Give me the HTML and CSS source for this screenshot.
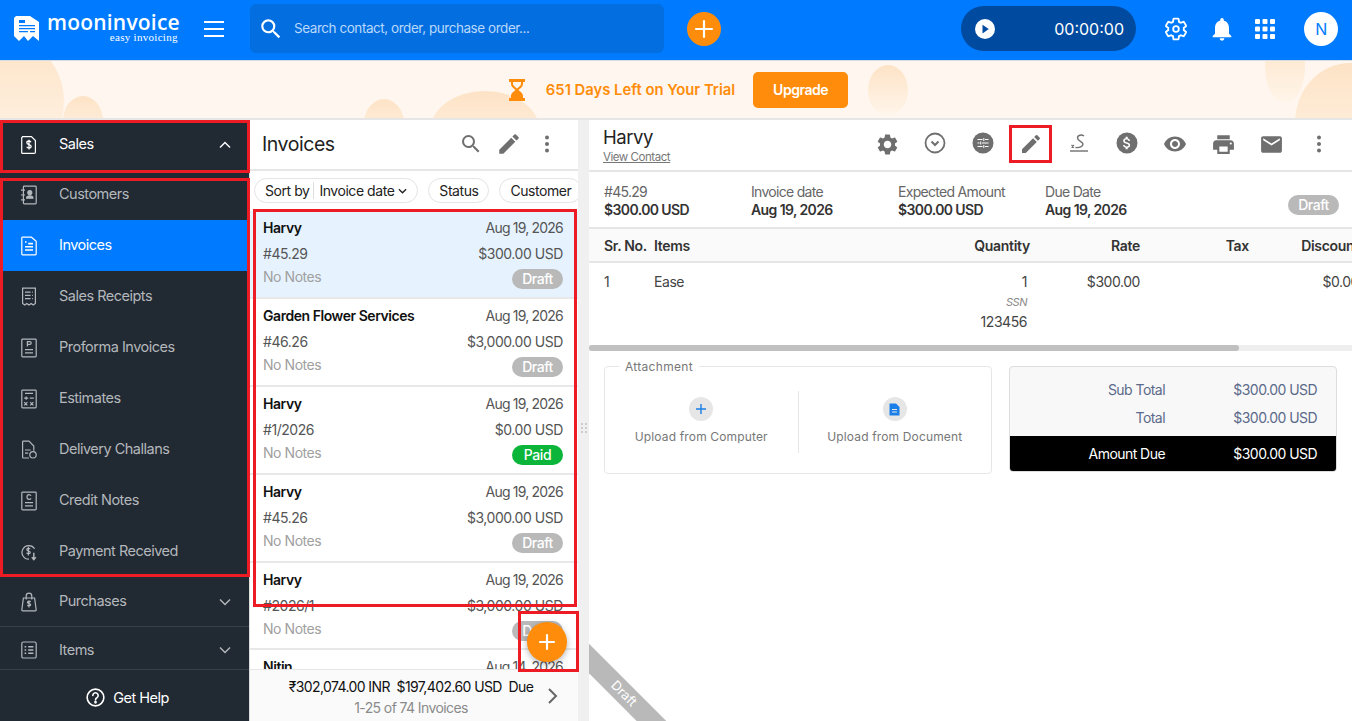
FILE: index.html
```html
<!DOCTYPE html>
<html lang="en">
<head>
    <meta charset="UTF-8">
    <meta name="viewport" content="width=device-width, initial-scale=1.0">
    <title>Invoices</title>
    <link rel="stylesheet" href="styles.css">
</head>
<body>
<div class="app">
    <header class="topbar">
        <div class="logo">
            <svg class="logo-mark" width="26" height="25" viewBox="0 0 26 25"><path fill="#fff" d="M2 0h14l9 6v19l-6-5-5 5-4-5-5 5-5-5V2z"/><path fill="#007bff" d="M5 4h6v3H5zM5 9h16v1.300H5zM5 12h16v1.300H5zM5 15h9v1.300H5zM16 15h5v1.300h-5z"/></svg>
            <div class="logo-text">
                <div class="logo-name">mooninvoice</div>
                <div class="logo-tag">easy invoicing</div>
            </div>
        </div>
        <div class="hamburger"><span></span><span></span><span></span></div>
        <div class="search">
            <svg width="26" height="26" viewBox="0 0 24 24" fill="#fff"><path d="M15.500 14h-.79l-.28-.27A6.471 6.471 0 0 0 16 9.500 6.500 6.500 0 1 0 9.500 16c1.610 0 3.090-.59 4.230-1.570l.27.28v.79l5 4.990L20.490 19l-4.990-5zm-6 0C7.010 14 5 11.990 5 9.500S7.010 5 9.500 5 14 7.010 14 9.500 11.990 14 9.500 14z"/></svg>
            <span>Search contact, order, purchase order...</span>
        </div>
        <div class="add-btn">
            <svg width="22" height="22" viewBox="0 0 22 22" stroke="#fff" stroke-width="2.200" stroke-linecap="round"><path d="M11 3v16M3 11h16"/></svg>
        </div>
        <div class="timer">
            <span class="play"><svg width="20" height="20" viewBox="0 0 16 16"><circle cx="8" cy="8" r="8" fill="#fff"/><path d="M6 4.500l5 3.500-5 3.500z" fill="#004a9f"/></svg></span>
            <span class="time">00:00:00</span>
        </div>
        <div class="top-icons">
            <svg width="26" height="26" viewBox="0 0 24 24" fill="none" stroke="#fff" stroke-width="1.700"><path d="M19.140 12.940c.04-.3.06-.61.06-.94 0-.32-.02-.64-.07-.94l2.030-1.580a.49.49 0 0 0 .12-.61l-1.920-3.320a.488.488 0 0 0-.59-.22l-2.390.96c-.5-.38-1.030-.7-1.620-.94l-.36-2.540a.484.484 0 0 0-.48-.41h-3.840c-.24 0-.43.17-.47.41l-.36 2.540c-.59.24-1.130.57-1.620.94l-2.390-.96c-.22-.08-.47 0-.59.22L2.740 8.870c-.12.21-.08.47.12.61l2.030 1.580c-.05.3-.09.63-.09.94s.02.64.07.94l-2.030 1.580a.49.49 0 0 0-.12.61l1.920 3.320c.12.22.37.29.59.22l2.390-.96c.5.38 1.030.7 1.620.94l.36 2.540c.05.24.24.41.48.41h3.840c.24 0 .44-.17.47-.41l.36-2.540c.59-.24 1.130-.56 1.620-.94l2.390.96c.22.08.47 0 .59-.22l1.920-3.320c.12-.22.07-.47-.12-.61l-2.010-1.580z"/><circle cx="12" cy="12" r="2.600"/></svg>
            <svg width="28" height="28" viewBox="0 0 24 24" fill="#fff"><path d="M12 22c1.100 0 2-.9 2-2h-4a2 2 0 0 0 2 2zm6-6v-5c0-3.070-1.630-5.640-4.500-6.320V4a1.500 1.500 0 0 0-3 0v.68C7.640 5.360 6 7.920 6 11v5l-2 2v1h16v-1l-2-2z"/></svg>
            <svg width="20" height="20" viewBox="0 0 20 20" fill="#fff"><rect x="0" y="0" width="5" height="5" rx="1"/><rect x="7.500" y="0" width="5" height="5" rx="1"/><rect x="15" y="0" width="5" height="5" rx="1"/><rect x="0" y="7.500" width="5" height="5" rx="1"/><rect x="7.500" y="7.500" width="5" height="5" rx="1"/><rect x="15" y="7.500" width="5" height="5" rx="1"/><rect x="0" y="15" width="5" height="5" rx="1"/><rect x="7.500" y="15" width="5" height="5" rx="1"/><rect x="15" y="15" width="5" height="5" rx="1"/></svg>
        </div>
        <div class="avatar">N</div>
    </header>

    <section class="trial">
        <i class="blob b1"></i><i class="blob b2"></i><i class="blob b3"></i><i class="blob b4"></i><i class="blob b5"></i><i class="blob b6"></i><i class="blob b7"></i>
        <svg width="18" height="22" viewBox="0 0 18 22" fill="#ff8c0a"><path d="M1 0h16v3h-2v2c0 3-3 4.500-4.500 6C12 12.500 15 14 15 17v2h2v3H1v-3h2v-2c0-3 3-4.500 4.500-6C6 9.500 3 8 3 5V3H1zM5 3v2c0 1.500 2.500 3 4 4.500C10.500 8 13 6.500 13 5V3z"/></svg>
        <span class="trial-text">651 Days Left on Your Trial</span>
        <span class="upgrade">Upgrade</span>
    </section>

    <div class="main">
        <aside class="sidebar">
            <div class="side-group active-group">
                <svg class="side-icon" viewBox="0 0 20 24"><path d="M2 1.500h11l5 5V21a1.500 1.500 0 0 1-1.500 1.500h-15A1.500 1.500 0 0 1 .9 21V3z"/><path d="M12.500 8.500C12 7.500 11 7 10 7c-1.500 0-2.700.8-2.700 2.200 0 3 5.400 1.600 5.400 4.500 0 1.400-1.200 2.300-2.700 2.300-1.200 0-2.300-.6-2.800-1.700M10 5.500v12" stroke-width="1.600"/></svg>
                <span>Sales</span>
                <svg class="chev" viewBox="0 0 12 8"><path d="M1 6.500l5-5 5 5"/></svg>
            </div>
            <nav class="side-nav">
                <a class="side-link">
                    <svg class="side-icon" viewBox="0 0 20 24"><rect x="3" y="1" width="16" height="22" rx="1"/><path d="M0 6h5M0 12h5M0 18h5"/><circle cx="11" cy="9" r="2.500" fill="currentColor"/><path d="M7 16c0-4 8-4 8 0z" fill="currentColor"/></svg>
                    <span>Customers</span>
                </a>
                <a class="side-link current">
                    <svg class="side-icon" viewBox="0 0 20 24"><path d="M2 1h11l6 5v16a1 1 0 0 1-1 1H2a1 1 0 0 1-1-1V2a1 1 0 0 1 1-1z"/><path d="M5 7h2M9 9h6M5 13h10M5 17h10" stroke-width="2"/></svg>
                    <span>Invoices</span>
                </a>
                <a class="side-link">
                    <svg class="side-icon" viewBox="0 0 20 24"><path d="M2 1h16v19l-2.700 2-2.600-2-2.700 2-2.700-2-2.600 2L2 20z"/><path d="M5 6h7M14 6h1M5 10h7M14 10h1M5 14h7M14 14h1"/></svg>
                    <span>Sales Receipts</span>
                </a>
                <a class="side-link">
                    <svg class="side-icon" viewBox="0 0 20 24"><rect x="1" y="1" width="18" height="22" rx="1"/><path d="M5 14h10M5 18h10M8 10V4h3a1.500 1.500 0 0 1 0 3.500H8"/></svg>
                    <span>Proforma Invoices</span>
                </a>
                <a class="side-link">
                    <svg class="side-icon" viewBox="0 0 20 24"><rect x="1" y="1" width="18" height="22" rx="1"/><path d="M5 5h10M4 11h5M6.500 9v4M11 11h5M4 16l4 4M8 16l-4 4M11.500 16l4 4M15.500 16l-4 4"/></svg>
                    <span>Estimates</span>
                </a>
                <a class="side-link">
                    <svg class="side-icon" viewBox="0 0 20 24"><path d="M10 22H3a1 1 0 0 1-1-1V2a1 1 0 0 1 1-1h7l6 6v6"/><path d="M5 12h7M5 16h4"/><circle cx="15" cy="18" r="4"/></svg>
                    <span>Delivery Challans</span>
                </a>
                <a class="side-link">
                    <svg class="side-icon" viewBox="0 0 20 24"><rect x="1" y="1" width="18" height="22" rx="1"/><path d="M5 14h10M5 18h10M12.500 5.500C12 4.500 11 4 10 4 8.500 4 7.500 5 7.500 7S8.500 10 10 10c1 0 2-.5 2.500-1.500"/></svg>
                    <span>Credit Notes</span>
                </a>
                <a class="side-link">
                    <svg class="side-icon" viewBox="0 0 20 24"><path d="M17 8a8.500 8.500 0 1 0-7 13"/><path d="M11.500 8.500C11 7.700 10.200 7.300 9.200 7.300c-1.200 0-2 .7-2 1.700 0 2.300 4.300 1.200 4.300 3.500 0 1-.9 1.700-2.200 1.700-1 0-1.900-.5-2.300-1.300M9.200 5.500v11"/><path d="M16 13v8M13.500 18.500l2.500 3 2.500-3" stroke-width="1.800"/></svg>
                    <span>Payment Received</span>
                </a>
            </nav>
            <div class="side-group">
                <svg class="side-icon" viewBox="0 0 20 24"><path d="M3 7h14l2 15a1 1 0 0 1-1 1H2a1 1 0 0 1-1-1z"/><path d="M6.500 9V4.500a3.500 3.500 0 0 1 7 0V9"/><path d="M12 12c-.4-.7-1.100-1-2-1-1.100 0-1.900.6-1.900 1.500 0 2 4 1 4 3 0 .9-.9 1.500-2 1.500-.9 0-1.700-.4-2.100-1.200M10 10v9"/></svg>
                <span>Purchases</span>
                <svg class="chev" viewBox="0 0 12 8"><path d="M1 1.500l5 5 5-5"/></svg>
            </div>
            <div class="side-group short">
                <svg class="side-icon" viewBox="0 0 20 24"><rect x="1" y="2" width="18" height="20" rx="2"/><path d="M4.500 8h2M9 8h6.500M4.500 12h2M9 12h6.500M4.500 16h2M9 16h6.500" stroke-width="2"/></svg>
                <span>Items</span>
                <svg class="chev" viewBox="0 0 12 8"><path d="M1 1.500l5 5 5-5"/></svg>
            </div>
            <div class="get-help">
                <svg width="19" height="19" viewBox="0 0 20 20" fill="none" stroke="#fff" stroke-width="1.700"><circle cx="10" cy="10" r="8.800"/><path d="M7.200 7.800A2.800 2.800 0 1 1 11.500 10.200c-1 .6-1.500 1.100-1.500 2.300" stroke-linecap="round"/><circle cx="10" cy="15" r=".6" fill="#fff"/></svg>
                <span>Get Help</span>
            </div>
        </aside>

        <section class="list-pane">
            <div class="list-head">
                <h2>Invoices</h2>
                <svg width="24" height="24" viewBox="0 0 24 24" fill="#6f6f6f"><path d="M15.500 14h-.79l-.28-.27A6.471 6.471 0 0 0 16 9.500 6.500 6.500 0 1 0 9.500 16c1.610 0 3.090-.59 4.230-1.570l.27.28v.79l5 4.990L20.490 19l-4.990-5zm-6 0C7.010 14 5 11.990 5 9.500S7.010 5 9.500 5 14 7.010 14 9.500 11.990 14 9.500 14z"/></svg>
                <svg width="26" height="26" viewBox="0 0 24 24" fill="#6f6f6f"><path d="M3 17.250V21h3.750L17.810 9.940l-3.750-3.750L3 17.250zM20.710 7.040a1 1 0 0 0 0-1.410l-2.340-2.340a1 1 0 0 0-1.410 0l-1.830 1.830 3.750 3.750 1.830-1.830z"/></svg>
                <svg width="24" height="24" viewBox="0 0 24 24" fill="#6f6f6f"><circle cx="12" cy="5.500" r="2"/><circle cx="12" cy="12" r="2"/><circle cx="12" cy="18.500" r="2"/></svg>
            </div>
            <div class="filters">
                <div class="chip sort"><span class="sort-by">Sort by</span><span>Invoice date</span><svg width="9" height="6" viewBox="0 0 10 6" fill="none" stroke="#222" stroke-width="1.500"><path d="M1 1l4 4 4-4"/></svg></div>
                <div class="chip">Status</div>
                <div class="chip">Customer</div>
            </div>
            <div class="cards">
                <div class="card selected">
                    <div class="card-row"><b>Harvy</b><span class="date">Aug 19, 2026</span></div>
                    <div class="card-row"><span>#45.29</span><span>$300.00 USD</span></div>
                    <div class="card-row last"><span class="notes">No Notes</span><span class="badge">Draft</span></div>
                </div>
                <div class="card">
                    <div class="card-row"><b>Garden Flower Services</b><span class="date">Aug 19, 2026</span></div>
                    <div class="card-row"><span>#46.26</span><span>$3,000.00 USD</span></div>
                    <div class="card-row last"><span class="notes">No Notes</span><span class="badge">Draft</span></div>
                </div>
                <div class="card">
                    <div class="card-row"><b>Harvy</b><span class="date">Aug 19, 2026</span></div>
                    <div class="card-row"><span>#1/2026</span><span>$0.00 USD</span></div>
                    <div class="card-row last"><span class="notes">No Notes</span><span class="badge paid">Paid</span></div>
                </div>
                <div class="card">
                    <div class="card-row"><b>Harvy</b><span class="date">Aug 19, 2026</span></div>
                    <div class="card-row"><span>#45.26</span><span>$3,000.00 USD</span></div>
                    <div class="card-row last"><span class="notes">No Notes</span><span class="badge">Draft</span></div>
                </div>
                <div class="card">
                    <div class="card-row"><b>Harvy</b><span class="date">Aug 19, 2026</span></div>
                    <div class="card-row"><span>#2026/1</span><span>$3,000.00 USD</span></div>
                    <div class="card-row last"><span class="notes">No Notes</span><span class="badge">Draft</span></div>
                </div>
                <div class="card">
                    <div class="card-row"><b>Nitin</b><span class="date">Aug 14, 2026</span></div>
                </div>
            </div>
            <div class="list-foot">
                <div class="foot-text">
                    <div class="foot-sum">₹302,074.00 INR&nbsp; $197,402.60 USD&nbsp; Due</div>
                    <div class="foot-count">1-25 of 74 Invoices</div>
                </div>
                <svg width="12" height="18" viewBox="0 0 12 18" fill="none" stroke="#666" stroke-width="2"><path d="M2 2l7 7-7 7"/></svg>
            </div>
            <div class="fab"><svg width="18" height="18" viewBox="0 0 18 18" stroke="#fff" stroke-width="2.200" stroke-linecap="round"><path d="M9 2v14M2 9h14"/></svg></div>
        </section>

        <div class="gutter"><i></i><i></i><i></i><i></i><i></i><i></i></div>

        <section class="detail">
            <div class="detail-head">
                <div class="contact">
                    <div class="contact-name">Harvy</div>
                    <a class="contact-link">View Contact</a>
                </div>
                <div class="tools">
                    <span class="tool"><svg width="25" height="25" viewBox="0 0 24 24" fill="#6f6f6f"><path fill-rule="evenodd" d="M19.140 12.940c.04-.3.06-.61.06-.94 0-.32-.02-.64-.07-.94l2.030-1.580a.49.49 0 0 0 .12-.61l-1.920-3.320a.488.488 0 0 0-.59-.22l-2.390.96c-.5-.38-1.030-.7-1.620-.94l-.36-2.540a.484.484 0 0 0-.48-.41h-3.840c-.24 0-.43.17-.47.41l-.36 2.540c-.59.24-1.130.57-1.620.94l-2.390-.96c-.22-.08-.47 0-.59.22L2.740 8.870c-.12.21-.08.47.12.61l2.030 1.580c-.05.3-.09.63-.09.94s.02.64.07.94l-2.030 1.580a.49.49 0 0 0-.12.61l1.920 3.320c.12.22.37.29.59.22l2.390-.96c.5.38 1.030.7 1.620.94l.36 2.540c.05.24.24.41.48.41h3.840c.24 0 .44-.17.47-.41l.36-2.540c.59-.24 1.130-.56 1.620-.94l2.390.96c.22.08.47 0 .59-.22l1.920-3.320c.12-.22.07-.47-.12-.61l-2.010-1.580zM12 15.600c-1.980 0-3.600-1.620-3.600-3.600s1.620-3.600 3.600-3.600 3.600 1.620 3.600 3.600-1.620 3.600-3.600 3.600z"/></svg></span>
                    <span class="tool"><svg width="22" height="22" viewBox="0 0 22 22" fill="none" stroke="#6f6f6f" stroke-width="1.800"><circle cx="11" cy="11" r="9.500"/><path d="M7.500 9.500L11 13l3.500-3.500" stroke-width="2"/></svg></span>
                    <span class="tool"><svg width="22" height="22" viewBox="0 0 22 22"><circle cx="11" cy="11" r="10.500" fill="#6f6f6f"/><path d="M5.500 7.500h5M13 7.500h3.500M5.500 11h2M10 11h6.500M5.500 14.500h5M13 14.500h3.500M11.800 6v3M8.700 9.500v3M11.800 13v3" stroke="#fff" stroke-width="1" fill="none"/></svg></span>
                    <span class="tool"><svg width="24" height="24" viewBox="0 0 24 24" fill="#6f6f6f"><path d="M3 17.250V21h3.750L17.810 9.940l-3.750-3.750L3 17.250zM20.710 7.040a1 1 0 0 0 0-1.410l-2.340-2.340a1 1 0 0 0-1.410 0l-1.830 1.830 3.750 3.750 1.830-1.830z"/></svg></span>
                    <span class="tool"><svg width="22" height="22" viewBox="0 0 22 22" fill="none" stroke="#6f6f6f" stroke-width="1.400"><path d="M16 4C13.500 2.300 9.500 3 9.500 6S15 9.500 15 12 11.500 16 7.500 15.500"/><path d="M3.500 13l2.500 2.500M6 13l-2.500 2.500" stroke-width="1.100"/><path d="M2 19h18" stroke-width="1.400"/></svg></span>
                    <span class="tool"><svg width="22" height="22" viewBox="0 0 22 22"><circle cx="11" cy="11" r="10.500" fill="#6f6f6f"/><g transform="translate(2.600 2.600) scale(.7)"><path fill="#fff" d="M11.800 10.900c-2.270-.59-3-1.200-3-2.150 0-1.090 1.010-1.850 2.700-1.850 1.780 0 2.440.85 2.500 2.100h2.210c-.07-1.720-1.120-3.300-3.210-3.810V3h-3v2.160c-1.940.42-3.500 1.680-3.500 3.610 0 2.310 1.910 3.460 4.700 4.130 2.500.6 3 1.480 3 2.410 0 .69-.49 1.790-2.700 1.790-2.060 0-2.870-.92-2.980-2.100h-2.200c.12 2.190 1.760 3.420 3.680 3.830V21h3v-2.150c1.950-.37 3.500-1.500 3.500-3.550 0-2.840-2.430-3.810-4.700-4.400z"/></g></svg></span>
                    <span class="tool"><svg width="24" height="24" viewBox="0 0 24 24" fill="#6f6f6f"><path d="M12 4.500C7 4.500 2.730 7.610 1 12c1.730 4.390 6 7.500 11 7.500s9.270-3.110 11-7.500c-1.730-4.390-6-7.500-11-7.500zM12 17c-2.760 0-5-2.240-5-5s2.240-5 5-5 5 2.240 5 5-2.240 5-5 5zm0-8c-1.660 0-3 1.340-3 3s1.340 3 3 3 3-1.340 3-3-1.340-3-3-3z"/></svg></span>
                    <span class="tool"><svg width="25" height="25" viewBox="0 0 24 24" fill="#6f6f6f"><path d="M19 8H5c-1.660 0-3 1.340-3 3v6h4v4h12v-4h4v-6c0-1.660-1.340-3-3-3zm-3 11H8v-5h8v5zm3-7c-.55 0-1-.45-1-1s.45-1 1-1 1 .45 1 1-.45 1-1 1zm-1-9H6v4h12V3z"/></svg></span>
                    <span class="tool"><svg width="25" height="25" viewBox="0 0 24 24" fill="#6f6f6f"><path d="M20 4H4c-1.100 0-1.990.9-1.990 2L2 18c0 1.100.9 2 2 2h16c1.100 0 2-.9 2-2V6c0-1.100-.9-2-2-2zm0 4l-8 5-8-5V6l8 5 8-5v2z"/></svg></span>
                    <span class="tool"><svg width="24" height="24" viewBox="0 0 24 24" fill="#6f6f6f"><circle cx="12" cy="5.500" r="2"/><circle cx="12" cy="12" r="2"/><circle cx="12" cy="18.500" r="2"/></svg></span>
                </div>
            </div>

            <div class="summary">
                <div class="sum-col"><span>#45.29</span><b>$300.00 USD</b></div>
                <div class="sum-col"><span>Invoice date</span><b>Aug 19, 2026</b></div>
                <div class="sum-col"><span>Expected Amount</span><b>$300.00 USD</b></div>
                <div class="sum-col"><span>Due Date</span><b>Aug 19, 2026</b></div>
                <span class="badge sum-badge">Draft</span>
            </div>

            <div class="table-wrap">
                <div class="t-grid t-head">
                    <span>Sr. No.</span><span>Items</span><span class="r">Quantity</span><span class="r">Rate</span><span class="r">Tax</span><span class="r">Discount</span>
                </div>
                <div class="t-grid t-row">
                    <span>1</span><span>Ease</span>
                    <span class="r qty">1<em>SSN</em><span>123456</span></span>
                    <span class="r">$300.00</span><span></span><span class="r">$0.00</span>
                </div>
                <div class="h-scroll"><div class="h-thumb"></div></div>
            </div>

            <div class="bottom">
                <fieldset class="attach">
                    <legend>Attachment</legend>
                    <div class="upload">
                        <span class="up-icon"><svg width="10" height="10" viewBox="0 0 10 10" stroke="#1a7fe8" stroke-width="1.400"><path d="M5 0v10M0 5h10"/></svg></span>
                        <span>Upload from Computer</span>
                    </div>
                    <div class="upload divided">
                        <span class="up-icon"><svg width="11" height="13" viewBox="0 0 11 13"><path d="M1 .5h6l3.500 3.500v8a.5.5 0 0 1-.5.5H1a.5.5 0 0 1-.5-.5V1A.5.5 0 0 1 1 .5z" fill="#1a7fe8"/><path d="M3 6.500h5M3 9h5" stroke="#e6e6e6"/></svg></span>
                        <span>Upload from Document</span>
                    </div>
                </fieldset>
                <div class="totals">
                    <div class="tot-row"><span>Sub Total</span><span>$300.00 USD</span></div>
                    <div class="tot-row"><span>Total</span><span>$300.00 USD</span></div>
                    <div class="tot-row due"><span>Amount Due</span><span>$300.00 USD</span></div>
                </div>
            </div>

            <div class="ribbon-wrap"><div class="ribbon">Draft</div></div>
        </section>
    </div>

    <!-- red review marks that sit on top of the page -->
    <div class="mark m-sales"></div>
    <div class="mark m-nav"></div>
    <div class="mark m-cards"></div>
    <div class="mark m-fab"></div>
    <div class="mark m-edit"></div>
</div>
</body>
</html>
```

FILE: styles.css
```css
* {
    box-sizing: border-box;
}
body {
    margin: 0;
    font-family: Inter, "Open Sans", sans-serif;
    font-size: 14px;
    letter-spacing: -0.45px;
    color: #222;
    background-color: #fff;
}
.app {
    position: relative;
    width: 1352px;
    height: 721px;
    overflow: hidden;
    display: flex;
    flex-direction: column;
}

/* top bar */
.topbar {
    height: 60px;
    flex: none;
    display: flex;
    align-items: center;
    background-color: #007bff;
    color: #fff;
    padding-bottom: 3px;
}
.logo {
    width: 204px;
    padding-left: 14px;
    display: flex;
    gap: 7px;
    align-items: center;
}
.logo-text {
    padding-bottom: 2px;
}
.logo-name {
    font-family: "Open Sans", sans-serif;
    font-size: 21px;
    font-weight: 600;
    line-height: 21px;
    letter-spacing: 0.2px;
}
.logo-tag {
    margin-top: -2px;
    font-family: "Liberation Serif", serif;
    font-size: 11px;
    line-height: 12px;
    text-align: right;
    letter-spacing: 0.3px;
    padding-right: 2px;
}
.hamburger {
    width: 20px;
    display: flex;
    flex-direction: column;
    gap: 5px;
}
.hamburger span {
    height: 2px;
    background-color: #fff;
}
.search {
    width: 414px;
    height: 49px;
    margin-left: 26px;
    padding-left: 8px;
    display: flex;
    align-items: center;
    gap: 10px;
    border-radius: 6px;
    background-color: #026ee0;
    color: #b9d8fb;
    font-size: 13.500px;
}
.search span {
    padding-bottom: 2px;
}
.add-btn {
    width: 34px;
    height: 34px;
    margin-left: 23px;
    border-radius: 50%;
    background-color: #ff8c0a;
    display: flex;
    align-items: center;
    justify-content: center;
}
.timer {
    width: 175px;
    height: 45px;
    margin-left: 240px;
    padding: 0 12px 0 14px;
    display: flex;
    align-items: center;
    justify-content: space-between;
    border-radius: 23px;
    background-color: #004a9f;
}
.play {
    display: flex;
}
.time {
    font-size: 16px;
    letter-spacing: 0;
}
.top-icons {
    margin-left: 27px;
    width: 112px;
    display: flex;
    align-items: center;
    justify-content: space-between;
}
.avatar {
    width: 34px;
    height: 34px;
    margin-left: 29px;
    border-radius: 50%;
    background-color: #fff;
    color: #007bff;
    font-size: 16px;
    display: flex;
    align-items: center;
    justify-content: center;
}

/* trial banner */
.trial {
    position: relative;
    height: 60px;
    flex: none;
    overflow: hidden;
    display: flex;
    align-items: center;
    justify-content: center;
    background-color: #fff7ef;
    border-top: 1px solid #d8dde2;
    border-bottom: 2px solid #e6e6e6;
    padding-left: 4px;
}
.trial > svg,
.trial-text,
.upgrade {
    position: relative;
}
.trial-text {
    margin-left: 20px;
    font-size: 14.800px;
    font-weight: 600;
    letter-spacing: 0;
    color: #ff8c0a;
}
.upgrade {
    width: 95px;
    height: 36px;
    margin-left: 18px;
    border-radius: 5px;
    background-color: #ff8c0a;
    color: #fff;
    font-weight: 600;
    display: flex;
    align-items: center;
    justify-content: center;
}
.blob {
    position: absolute;
    border-radius: 50%;
    background: linear-gradient(#fde3c6, #fff5ea);
}
.b1 { left: -60px; top: -25px; width: 124px; height: 130px; }
.b2 { left: 63px; top: 35px; width: 40px; height: 50px; }
.b3 { left: 364px; top: 38px; width: 40px; height: 50px; }
.b4 { left: 430px; top: 30px; width: 110px; height: 80px; }
.b5 { left: 868px; top: 4px; width: 40px; height: 50px; }
.b6 { left: 1265px; top: -30px; width: 40px; height: 72px; }
.b7 { left: 1295px; top: 2px; width: 110px; height: 120px; }

/* sidebar */
.main {
    flex: 1;
    display: flex;
    min-height: 0;
}
.sidebar {
    width: 249px;
    flex: none;
    display: flex;
    flex-direction: column;
    background-color: #212932;
    color: #b4b8bc;
    font-size: 14.500px;
    letter-spacing: -0.5px;
}
.side-group,
.side-link {
    display: flex;
    align-items: center;
    padding-left: 21px;
    gap: 22px;
}
.side-group {
    height: 50px;
    padding-right: 18px;
    border-bottom: 1px solid #37404a;
}
.side-group span {
    flex: 1;
    padding-bottom: 2px;
}
.side-group.short {
    height: 43px;
    padding-top: 4px;
}
.active-group {
    height: 49px;
    color: #fff;
    border-bottom: none;
}
.side-link {
    height: 51px;
}
.side-link span {
    padding-bottom: 2px;
}
.side-link.current {
    background-color: #007bff;
    color: #fff;
}
.side-icon {
    width: 16px;
    height: 20px;
    flex: none;
    fill: none;
    stroke: currentColor;
    stroke-width: 1.500;
}
.chev {
    width: 12px;
    height: 8px;
    fill: none;
    stroke: currentColor;
    stroke-width: 1.400;
}
.get-help {
    flex: 1;
    display: flex;
    align-items: center;
    justify-content: center;
    gap: 8px;
    padding: 4px 0 0 6px;
    color: #fff;
}

/* invoice list */
.list-pane {
    position: relative;
    width: 329px;
    flex: none;
    display: flex;
    flex-direction: column;
    border-left: 1px solid #ddd;
}
.list-head {
    height: 51px;
    flex: none;
    display: flex;
    align-items: center;
    padding: 0 19px 2px 12px;
    gap: 13px;
    border-bottom: 2px solid #e6e6e6;
}
.list-head h2 {
    flex: 1;
    margin: 0;
    font-size: 19.500px;
    font-weight: 400;
    color: #222;
}
.filters {
    height: 40px;
    flex: none;
    display: flex;
    align-items: center;
    gap: 10px;
    padding: 0 0 1px 4px;
    overflow: hidden;
}
.chip {
    flex: none;
    height: 25px;
    padding: 0 10px;
    display: flex;
    align-items: center;
    gap: 4px;
    border: 1px solid #e4e4e4;
    border-radius: 13px;
}
.sort-by {
    padding-right: 4px;
    margin-right: 1px;
    border-right: 1px solid #ddd;
}
.cards {
    flex: 1;
    min-height: 0;
    overflow: hidden;
}
.card {
    height: 87.900px;
    padding: 7px 15px 0 13px;
    border-bottom: 2px solid #e8e8e8;
    color: #555;
}
.card.selected {
    background-color: #e6f3ff;
}
.card-row {
    display: flex;
    justify-content: space-between;
    line-height: 20px;
    margin-bottom: 6px;
}
.card-row b {
    font-weight: 600;
    color: #111;
}
.date {
    letter-spacing: -0.8px;
}
.card-row.last {
    margin-top: -1px;
    margin-bottom: 0;
}
.notes {
    color: #a0a0a0;
    margin-top: -2px;
}
.badge {
    width: 51px;
    height: 20px;
    border-radius: 10px;
    background-color: #b9b9b9;
    color: #fff;
    font-weight: 500;
    line-height: 20px;
    text-align: center;
}
.badge.paid {
    background-color: #0bb53a;
}
.list-foot {
    height: 52px;
    flex: none;
    display: flex;
    align-items: center;
    padding-right: 19px;
    background-color: #fafafa;
    border-top: 1px solid #e6e6e6;
}
.foot-text {
    flex: 1;
    text-align: center;
    line-height: 21px;
    padding: 3px 0 0 25px;
    letter-spacing: -0.6px;
}
.foot-sum {
    color: #111;
}
.foot-count {
    color: #8a8a8a;
}
.fab {
    position: absolute;
    left: 277px;
    top: 502px;
    width: 40px;
    height: 40px;
    border-radius: 50%;
    background-color: #ff8c0a;
    box-shadow: 0 2px 6px rgba(0, 0, 0, 0.3);
    display: flex;
    align-items: center;
    justify-content: center;
}
.gutter {
    width: 11px;
    flex: none;
    display: grid;
    grid-template-columns: 2px 2px;
    grid-auto-rows: 2px;
    gap: 2px;
    align-content: center;
    justify-content: center;
    padding-top: 14px;
    background-color: #f0f0f0;
}
.gutter i {
    background-color: #ccc;
}

/* invoice detail */
.detail {
    position: relative;
    flex: 1;
    min-width: 0;
    overflow: hidden;
}
.detail-head {
    height: 52px;
    display: flex;
    align-items: center;
    padding: 0 0 2px 14px;
    border-bottom: 2px solid #e6e6e6;
}
.contact {
    flex: 1;
}
.contact-name {
    font-size: 18.500px;
    line-height: 24px;
    color: #222;
}
.contact-link {
    display: block;
    margin-top: 1px;
    line-height: 14px;
    font-size: 11.500px;
    color: #777;
    text-decoration: underline;
}
.tools {
    display: flex;
    margin-right: 9px;
}
.tool {
    width: 48px;
    display: flex;
    justify-content: center;
}
.summary {
    height: 57px;
    display: flex;
    align-items: center;
    padding: 2px 13px 0 15px;
    border-bottom: 2px solid #e6e6e6;
}
.sum-col {
    width: 147px;
    display: flex;
    flex-direction: column;
    line-height: 18px;
    color: #666;
}
.sum-col span {
    letter-spacing: -0.7px;
}
.sum-col b {
    font-weight: 600;
    letter-spacing: -0.6px;
    color: #333;
}
.sum-badge {
    margin-left: auto;
    margin-top: 8px;
}
.t-grid {
    display: grid;
    width: 790px;
    grid-template-columns: 50px 266px 110px 110px 109px 110px;
    padding-left: 15px;
}
.r {
    text-align: right;
}
.t-head {
    height: 34px;
    align-items: center;
    font-weight: 600;
    letter-spacing: -0.3px;
    color: #333;
    background-color: #fafafa;
    border-bottom: 2px solid #e6e6e6;
}
.t-row {
    height: 82px;
    padding-top: 9px;
    line-height: 20px;
    color: #444;
}
.qty {
    padding-right: 3px;
}
.qty em {
    display: block;
    font-size: 11px;
    color: #888;
}
.qty span {
    display: block;
}
.h-scroll {
    height: 6px;
    background-color: #eee;
}
.h-thumb {
    width: 650px;
    height: 100%;
    border-radius: 3px;
    background-color: #c0c0c0;
}
.bottom {
    display: flex;
    gap: 17px;
    align-items: flex-start;
    padding: 8px 15px 0;
}
.attach {
    width: 388px;
    height: 115px;
    flex: none;
    margin: 0;
    padding: 8px 0 12px;
    display: flex;
    border: 1px solid #e6e6e6;
    border-radius: 4px;
}
.attach legend {
    margin-left: 14px;
    padding: 0 6px;
    font-size: 12px;
    letter-spacing: 0.3px;
    color: #777;
}
.upload {
    flex: 1;
    height: 62px;
    align-self: center;
    display: flex;
    flex-direction: column;
    align-items: center;
    justify-content: center;
    gap: 8px;
    padding-bottom: 2px;
    font-size: 12px;
    letter-spacing: 0.15px;
    color: #777;
}
.upload.divided {
    border-left: 1px solid #e6e6e6;
}
.up-icon {
    width: 24px;
    height: 24px;
    border-radius: 50%;
    background-color: #e6e6e6;
    display: flex;
    align-items: center;
    justify-content: center;
}
.totals {
    width: 329px;
    margin-top: 7px;
    padding-top: 8px;
    border: 1px solid #ddd;
    border-radius: 4px;
    background-color: #f8f8f8;
    color: #5b6a8a;
    letter-spacing: -0.55px;
    overflow: hidden;
}
.tot-row {
    height: 28px;
    display: grid;
    grid-template-columns: 155px 152px;
    align-items: center;
    text-align: right;
}
.tot-row.due {
    height: 35px;
    margin-top: 5px;
    background-color: #000;
    color: #fff;
}
.ribbon-wrap {
    position: absolute;
    left: 0;
    bottom: 0;
    width: 90px;
    height: 90px;
    overflow: hidden;
}
.ribbon {
    position: absolute;
    left: -50px;
    top: 52px;
    width: 170px;
    height: 21px;
    transform: rotate(45deg);
    background-color: #b9b9b9;
    color: #fff;
    font-size: 13px;
    line-height: 21px;
    letter-spacing: 0;
    text-align: center;
}

/* review marks */
.mark {
    position: absolute;
    border: 3px solid #ed1c24;
}
.m-sales { left: 0; top: 120px; width: 250px; height: 53px; }
.m-nav { left: 0; top: 178px; width: 250px; height: 399px; }
.m-cards { left: 253px; top: 209px; width: 324px; height: 398px; }
.m-fab { left: 518px; top: 611px; width: 61px; height: 61px; }
.m-edit { left: 1009px; top: 125px; width: 43px; height: 38px; }
```
